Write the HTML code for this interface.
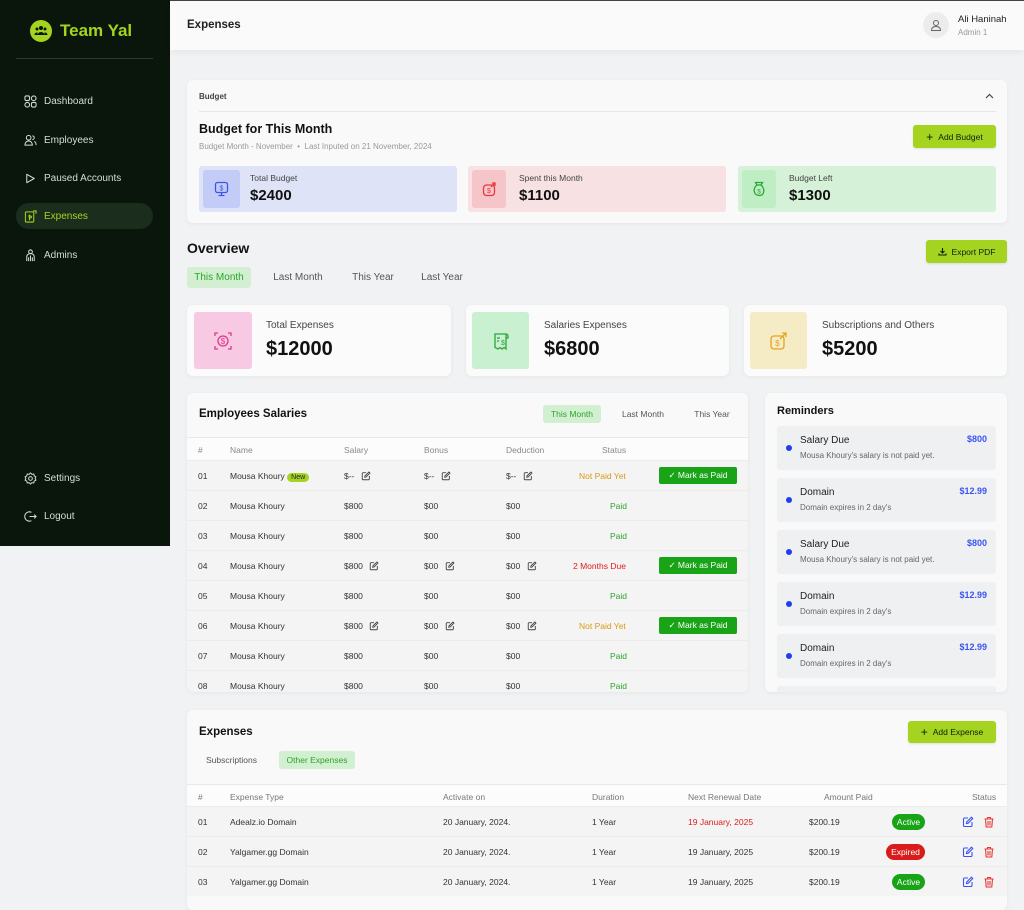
<!DOCTYPE html>
<html><head><meta charset="utf-8"><style>
*{box-sizing:border-box;margin:0;padding:0}
body{width:1024px;height:900px;overflow:hidden;background:#f1f2f3;font-family:"Liberation Sans",Arial,sans-serif;color:#1c1f1d;position:relative;font-size:9px}
.a{position:absolute}
.side{left:0;top:0;width:170px;height:546px;background:#0a160c}
.nav{left:24px;font-size:10px;color:#d6dbd7;display:flex;align-items:center;gap:7px}
.nav svg{width:13px;height:13px}
.card{background:#f9f9f9;border-radius:6px;box-shadow:0 1px 4px rgba(0,0,0,.05)}
.btn{background:#a4d41f;border-radius:3px;font-size:8.5px;color:#102008;display:flex;align-items:center;justify-content:center;gap:5px;box-shadow:0 1px 2px rgba(0,0,0,.1)}
.tab{font-size:10px;color:#555;display:flex;align-items:center;justify-content:center}
.tabon{background:#d3efd1;color:#2aa52a;border-radius:3px}
.ib{border-radius:3px;display:flex;align-items:center;justify-content:center}
.lbl{font-size:8.5px;color:#444}
.big{font-size:15px;font-weight:bold;color:#111}
.big2{font-size:20px;font-weight:bold;color:#111}
.row{position:absolute;left:0;right:0;height:30px;border-top:1px solid #ececec;background:#f4f4f4;font-size:8.5px;color:#333}
.row span{position:absolute;top:10px}
.mp{position:absolute;left:472px;top:6px;width:78px;height:17px;background:#19a317;color:#fff;border-radius:2px;font-size:8.5px;display:flex;align-items:center;justify-content:center;gap:5px}
.ed{display:inline-block;width:10px;height:10px;vertical-align:-2px;margin-left:4px}
.rem{position:absolute;left:12px;width:219px;height:44px;background:#eff0f1;border-radius:3px}
.rem .d{position:absolute;left:9px;top:19px;width:6px;height:6px;border-radius:50%;background:#1d3ff0}
.rem .t{position:absolute;left:23px;top:9px;font-size:10px;color:#222}
.rem .s{position:absolute;left:23px;top:25px;font-size:8px;color:#666}
.rem .v{position:absolute;right:9px;top:8px;font-size:9px;font-weight:bold;color:#3b55f0}
.pill{position:absolute;top:7px;height:16px;border-radius:8px;color:#fff;font-size:8.5px;display:flex;align-items:center;justify-content:center}
.ic{position:absolute;top:9px;width:12px;height:12px}
</style></head><body>
<svg width="0" height="0" style="position:absolute"><defs>
<symbol id="ed" viewBox="0 0 12 12"><path d="M6 2H2.5A1 1 0 0 0 1.5 3v6.5a1 1 0 0 0 1 1H9a1 1 0 0 0 1-1V6" fill="none" stroke="currentColor" stroke-width="1.1"/><path d="M9.5 1.2l1.3 1.3L6 7.3 4.4 7.6 4.7 6z" fill="none" stroke="currentColor" stroke-width="1.1" stroke-linejoin="round"/></symbol>
<symbol id="tr" viewBox="0 0 12 12"><path d="M1.5 3h9M4.5 3V1.5h3V3M2.5 3l.7 8h5.6l.7-8M5 5v4.5M7 5v4.5" fill="none" stroke="currentColor" stroke-width="1.1"/></symbol>
</defs></svg>
<div class="a" style="left:0;top:0;width:1024px;height:1px;background:#444"></div>
<div class="a side">
 <div class="a" style="left:30px;top:20px;width:22px;height:22px;border-radius:50%;background:#a4d41f"></div>
 <svg class="a" style="left:34px;top:25px" width="14" height="12" viewBox="0 0 14 12"><circle cx="7" cy="3" r="2" fill="#0a160c"/><circle cx="3" cy="4" r="1.5" fill="#0a160c"/><circle cx="11" cy="4" r="1.5" fill="#0a160c"/><path d="M3.5 10a3.5 3 0 0 1 7 0z M0.5 10a2.5 2.5 0 0 1 3-2.5v2.5z M13.5 10a2.5 2.5 0 0 0-3-2.5v2.5z" fill="#0a160c"/></svg>
 <div class="a" style="left:60px;top:21px;font-size:17px;font-weight:bold;color:#a4d41f">Team Yal</div>
 <div class="a" style="left:16px;top:58px;width:137px;height:1px;background:#2a3a2c"></div>
 <div class="a nav" style="top:95px"><svg viewBox="0 0 14 14" fill="none" stroke="#d6dbd7" stroke-width="1.1"><rect x="1" y="1" width="5" height="5" rx="1.5"/><rect x="8" y="1" width="5" height="5" rx="2.5"/><rect x="1" y="8" width="5" height="5" rx="2.5"/><rect x="8" y="8" width="5" height="5" rx="1.5"/></svg>Dashboard</div>
 <div class="a nav" style="top:134px"><svg viewBox="0 0 14 14" fill="none" stroke="#d6dbd7" stroke-width="1.1"><circle cx="5" cy="4" r="2.5"/><path d="M1 12c0-3 2-4.5 4-4.5s4 1.5 4 4.5z"/><path d="M9 2a2 2 0 0 1 0 4M11 8c1.5.5 2 2 2 4"/></svg>Employees</div>
 <div class="a nav" style="top:172px"><svg viewBox="0 0 14 14" fill="none" stroke="#d6dbd7" stroke-width="1.1"><path d="M3 2.5l8 4.5-8 4.5z" stroke-linejoin="round"/></svg>Paused Accounts</div>
 <div class="a" style="left:16px;top:203px;width:137px;height:26px;border-radius:13px;background:#1b2d1d"></div>
 <div class="a nav" style="top:210px;color:#a4d41f"><svg viewBox="0 0 14 14" fill="none" stroke="#a4d41f" stroke-width="1.1"><rect x="1.5" y="2" width="9" height="11" rx="1"/><path d="M6 5v6M4.5 6.5h2.5a1 1 0 0 1 0 2h-2"/><path d="M10 1l3 0v3"/></svg>Expenses</div>
 <div class="a nav" style="top:249px"><svg viewBox="0 0 14 14" fill="none" stroke="#d6dbd7" stroke-width="1.1"><circle cx="7" cy="3" r="2"/><path d="M3 13V8a4 3 0 0 1 8 0v5M7 7v6M5 9v4M9 9v4"/></svg>Admins</div>
 <div class="a nav" style="top:472px"><svg viewBox="0 0 14 14" fill="none" stroke="#d6dbd7" stroke-width="1.1"><circle cx="7" cy="7" r="2"/><path d="M7 1l1.5 1.5 2-.3.5 2 1.8 1L12 7l.8 1.8-1.8 1-.5 2-2-.3L7 13l-1.5-1.5-2 .3-.5-2-1.8-1L2 7l-.8-1.8 1.8-1 .5-2 2 .3z"/></svg>Settings</div>
 <div class="a nav" style="top:510px"><svg viewBox="0 0 14 14" fill="none" stroke="#d6dbd7" stroke-width="1.1"><path d="M8 2.5A5 5 0 1 0 8 11.5M6 7h7M11 5l2 2-2 2"/></svg>Logout</div>
</div>
<div class="a" style="left:170px;top:1px;width:854px;height:49px;background:#fafafa;box-shadow:0 2px 6px rgba(0,0,0,.05)"></div>
<div class="a" style="left:187px;top:19px;font-size:11.5px;font-weight:bold;color:#222">Expenses</div>
<div class="a" style="left:923px;top:12px;width:26px;height:26px;border-radius:50%;background:#ececec"></div>
<svg class="a" style="left:930px;top:19px" width="12" height="12" viewBox="0 0 12 12" fill="none" stroke="#666" stroke-width="1"><circle cx="6" cy="4" r="2.5"/><path d="M1.5 11.5c0-3 2-4 4.5-4s4.5 1 4.5 4z"/></svg>
<div class="a" style="left:958px;top:14px;font-size:9.5px;color:#222">Ali Haninah</div>
<div class="a" style="left:958px;top:28px;font-size:8px;color:#999">Admin 1</div>

<div class="a card" style="left:187px;top:80px;width:820px;height:143px"></div>
<div class="a" style="left:199px;top:92px;font-size:8px;font-weight:bold;color:#444">Budget</div>
<svg class="a" style="left:985px;top:93px" width="9" height="6" viewBox="0 0 9 6" fill="none" stroke="#444" stroke-width="1.2"><path d="M1 5l3.5-3.5L8 5"/></svg>
<div class="a" style="left:199px;top:111px;width:797px;height:1px;background:#e6e6e6"></div>
<div class="a" style="left:199px;top:122px;font-size:12.5px;font-weight:bold;color:#111">Budget for This Month</div>
<div class="a" style="left:199px;top:142px;font-size:8px;color:#999">Budget Month - November &nbsp;•&nbsp; Last Inputed on 21 November, 2024</div>
<div class="a btn" style="left:913px;top:125px;width:83px;height:23px"><b style="font-size:12px;font-weight:normal">+</b>Add Budget</div>
<div class="a" style="left:199px;top:166px;width:258px;height:46px;background:#dfe3f7;border-radius:3px"></div>
<div class="a ib" style="left:203px;top:170px;width:37px;height:38px;background:#c3ccf6"><svg width="15" height="16" viewBox="0 0 15 16" fill="none" stroke="#3a55e8" stroke-width="1.3"><rect x="1.5" y="1.5" width="12" height="10" rx="2"/><path d="M7.5 11.5v3M4.5 14.5h6"/><text x="7.5" y="9.5" font-size="7" text-anchor="middle" fill="#3a55e8" stroke="none" font-family="Liberation Sans">$</text></svg></div>
<div class="a lbl" style="left:250px;top:173px">Total Budget</div>
<div class="a big" style="left:250px;top:187px">$2400</div>
<div class="a" style="left:468px;top:166px;width:258px;height:46px;background:#f8e1e3;border-radius:3px"></div>
<div class="a ib" style="left:472px;top:170px;width:34px;height:38px;background:#f6c5ca"><svg width="15" height="15" viewBox="0 0 15 15" fill="none" stroke="#e5393d" stroke-width="1.3"><rect x="1.5" y="3" width="11" height="10.5" rx="3"/><path d="M9 5l4-4M10 1h3v3"/><text x="7" y="11" font-size="7" text-anchor="middle" fill="#e5393d" stroke="none" font-family="Liberation Sans">$</text></svg></div>
<div class="a lbl" style="left:519px;top:173px">Spent this Month</div>
<div class="a big" style="left:519px;top:187px">$1100</div>
<div class="a" style="left:738px;top:166px;width:258px;height:46px;background:#d5f1d8;border-radius:3px"></div>
<div class="a ib" style="left:742px;top:170px;width:34px;height:38px;background:#bfeec5"><svg width="14" height="16" viewBox="0 0 14 16" fill="none" stroke="#2ba536" stroke-width="1.3"><path d="M5 4L3.5 1.5h7L9 4M5 4h4M5 4C1 7 1 14 7 14.5s6-7.5 2-10.5"/><text x="7" y="12.5" font-size="6.5" text-anchor="middle" fill="#2ba536" stroke="none" font-family="Liberation Sans">$</text></svg></div>
<div class="a lbl" style="left:789px;top:173px">Budget Left</div>
<div class="a big" style="left:789px;top:187px">$1300</div>

<div class="a" style="left:187px;top:240px;font-size:14px;font-weight:bold;color:#111">Overview</div>
<div class="a btn" style="left:926px;top:240px;width:81px;height:23px"><svg width="9" height="9" viewBox="0 0 9 9" fill="none" stroke="#102008" stroke-width="1.1"><path d="M4.5 1v5M2.5 4l2 2 2-2M1 6.5V8h7V6.5"/></svg>Export PDF</div>
<div class="a tab tabon" style="left:187px;top:267px;width:64px;height:21px">This Month</div>
<div class="a tab" style="left:268px;top:267px;width:60px;height:21px">Last Month</div>
<div class="a tab" style="left:347px;top:267px;width:52px;height:21px">This Year</div>
<div class="a tab" style="left:417px;top:267px;width:50px;height:21px">Last Year</div>

<div class="a card" style="left:187px;top:305px;width:264px;height:71px;background:#fbfbfb"></div>
<div class="a ib" style="left:194px;top:312px;width:58px;height:57px;background:#f7c9e3"><svg width="20" height="20" viewBox="0 0 20 20" fill="none" stroke="#e0388b" stroke-width="1.3"><circle cx="10" cy="10" r="5"/><path d="M2 5V2h3M18 5V2h-3M2 15v3h3M18 15v3h-3"/><text x="10" y="13" font-size="8" text-anchor="middle" fill="#e0388b" stroke="none" font-family="Liberation Sans">$</text></svg></div>
<div class="a" style="left:266px;top:320px;font-size:10px;color:#444">Total Expenses</div>
<div class="a big2" style="left:266px;top:338px">$12000</div>
<div class="a card" style="left:466px;top:305px;width:263px;height:71px;background:#fbfbfb"></div>
<div class="a ib" style="left:472px;top:312px;width:57px;height:57px;background:#c9f0d0"><svg width="20" height="20" viewBox="0 0 20 20" fill="none" stroke="#2ba536" stroke-width="1.3"><path d="M4 3h11v15l-2-1.5-2 1.5-2-1.5-2 1.5-3-1.5z"/><path d="M15 3a2 2 0 0 1 2 2v2h-2M6 7h3M6 10h2"/><text x="12" y="14" font-size="7" text-anchor="middle" fill="#2ba536" stroke="none" font-family="Liberation Sans">$</text></svg></div>
<div class="a" style="left:544px;top:320px;font-size:10px;color:#444">Salaries Expenses</div>
<div class="a big2" style="left:544px;top:338px">$6800</div>
<div class="a card" style="left:744px;top:305px;width:263px;height:71px;background:#fbfbfb"></div>
<div class="a ib" style="left:750px;top:312px;width:57px;height:57px;background:#f5ecc5"><svg width="20" height="20" viewBox="0 0 20 20" fill="none" stroke="#e3a420" stroke-width="1.3"><rect x="2" y="5" width="13" height="13" rx="3"/><path d="M11 8l6-6M13 2h4v4"/><text x="8.5" y="15" font-size="8" text-anchor="middle" fill="#e3a420" stroke="none" font-family="Liberation Sans">$</text></svg></div>
<div class="a" style="left:822px;top:320px;font-size:10px;color:#444">Subscriptions and Others</div>
<div class="a big2" style="left:822px;top:338px">$5200</div>

<div class="a card" style="left:187px;top:393px;width:561px;height:299px;overflow:hidden">
 <div class="a" style="left:12px;top:15px;font-size:11.5px;font-weight:bold;color:#111">Employees Salaries</div>
 <div class="a tab tabon" style="left:356px;top:12px;width:58px;height:18px;font-size:8.5px">This Month</div>
 <div class="a tab" style="left:430px;top:12px;width:52px;height:18px;font-size:8.5px">Last Month</div>
 <div class="a tab" style="left:500px;top:12px;width:50px;height:18px;font-size:8.5px">This Year</div>
 <div class="a" style="left:0;right:0;top:44px;height:23px;background:#fcfcfc;border-top:1px solid #e8e8e8;font-size:8.5px;color:#888">
  <span class="a" style="left:11px;top:7px">#</span><span class="a" style="left:43px;top:7px">Name</span><span class="a" style="left:157px;top:7px">Salary</span><span class="a" style="left:237px;top:7px">Bonus</span><span class="a" style="left:319px;top:7px">Deduction</span><span class="a" style="left:415px;top:7px">Status</span></div>
 <div class="row" style="top:67px"><span style="left:11px">01</span><span style="left:43px">Mousa Khoury <i style="font-style:normal;background:#a4d41f;border-radius:6px;padding:1px 4px;font-size:7px;color:#223">New</i></span><span style="left:157px">$-- <svg class="ed" style="color:#444"><use href="#ed"/></svg></span><span style="left:237px">$-- <svg class="ed" style="color:#444"><use href="#ed"/></svg></span><span style="left:319px">$-- <svg class="ed" style="color:#444"><use href="#ed"/></svg></span><span style="left:392px;color:#d89a14">Not Paid Yet</span><div class="mp">✓ Mark as Paid</div></div>
 <div class="row" style="top:97px"><span style="left:11px">02</span><span style="left:43px">Mousa Khoury</span><span style="left:157px">$800</span><span style="left:237px">$00</span><span style="left:319px">$00</span><span style="left:423px;color:#2aa52a">Paid</span></div>
 <div class="row" style="top:127px"><span style="left:11px">03</span><span style="left:43px">Mousa Khoury</span><span style="left:157px">$800</span><span style="left:237px">$00</span><span style="left:319px">$00</span><span style="left:423px;color:#2aa52a">Paid</span></div>
 <div class="row" style="top:157px"><span style="left:11px">04</span><span style="left:43px">Mousa Khoury</span><span style="left:157px">$800 <svg class="ed" style="color:#444"><use href="#ed"/></svg></span><span style="left:237px">$00 <svg class="ed" style="color:#444"><use href="#ed"/></svg></span><span style="left:319px">$00 <svg class="ed" style="color:#444"><use href="#ed"/></svg></span><span style="left:386px;color:#e01b1b">2 Months Due</span><div class="mp">✓ Mark as Paid</div></div>
 <div class="row" style="top:187px"><span style="left:11px">05</span><span style="left:43px">Mousa Khoury</span><span style="left:157px">$800</span><span style="left:237px">$00</span><span style="left:319px">$00</span><span style="left:423px;color:#2aa52a">Paid</span></div>
 <div class="row" style="top:217px"><span style="left:11px">06</span><span style="left:43px">Mousa Khoury</span><span style="left:157px">$800 <svg class="ed" style="color:#444"><use href="#ed"/></svg></span><span style="left:237px">$00 <svg class="ed" style="color:#444"><use href="#ed"/></svg></span><span style="left:319px">$00 <svg class="ed" style="color:#444"><use href="#ed"/></svg></span><span style="left:392px;color:#d89a14">Not Paid Yet</span><div class="mp">✓ Mark as Paid</div></div>
 <div class="row" style="top:247px"><span style="left:11px">07</span><span style="left:43px">Mousa Khoury</span><span style="left:157px">$800</span><span style="left:237px">$00</span><span style="left:319px">$00</span><span style="left:423px;color:#2aa52a">Paid</span></div>
 <div class="row" style="top:277px"><span style="left:11px">08</span><span style="left:43px">Mousa Khoury</span><span style="left:157px">$800</span><span style="left:237px">$00</span><span style="left:319px">$00</span><span style="left:423px;color:#2aa52a">Paid</span></div>
</div>

<div class="a card" style="left:765px;top:393px;width:242px;height:299px;overflow:hidden">
 <div class="a" style="left:12px;top:12px;font-size:11px;font-weight:bold;color:#111">Reminders</div>
 <div class="rem" style="top:33px"><div class="d"></div><div class="t">Salary Due</div><div class="s">Mousa Khoury's salary is not paid yet.</div><div class="v">$800</div></div>
 <div class="rem" style="top:85px"><div class="d"></div><div class="t">Domain</div><div class="s">Domain expires in 2 day's</div><div class="v">$12.99</div></div>
 <div class="rem" style="top:137px"><div class="d"></div><div class="t">Salary Due</div><div class="s">Mousa Khoury's salary is not paid yet.</div><div class="v">$800</div></div>
 <div class="rem" style="top:189px"><div class="d"></div><div class="t">Domain</div><div class="s">Domain expires in 2 day's</div><div class="v">$12.99</div></div>
 <div class="rem" style="top:241px"><div class="d"></div><div class="t">Domain</div><div class="s">Domain expires in 2 day's</div><div class="v">$12.99</div></div>
 <div class="rem" style="top:293px"></div>
</div>

<div class="a card" style="left:187px;top:710px;width:820px;height:200px;overflow:hidden">
 <div class="a" style="left:12px;top:16px;font-size:11.5px;font-weight:bold;color:#111">Expenses</div>
 <div class="a btn" style="left:721px;top:11px;width:88px;height:22px"><b style="font-size:12px;font-weight:normal">+</b>Add Expense</div>
 <div class="a tab" style="left:12px;top:41px;width:65px;height:18px;font-size:8.5px">Subscriptions</div>
 <div class="a tab tabon" style="left:92px;top:41px;width:76px;height:18px;font-size:8.5px">Other Expenses</div>
 <div class="a" style="left:0;right:0;top:74px;height:22px;background:#fcfcfc;border-top:1px solid #e8e8e8;font-size:8.5px;color:#777">
  <span class="a" style="left:11px;top:7px">#</span><span class="a" style="left:43px;top:7px">Expense Type</span><span class="a" style="left:256px;top:7px">Activate on</span><span class="a" style="left:405px;top:7px">Duration</span><span class="a" style="left:501px;top:7px">Next Renewal Date</span><span class="a" style="left:637px;top:7px">Amount Paid</span><span class="a" style="left:785px;top:7px">Status</span></div>
 <div class="row" style="top:96px"><span style="left:11px">01</span><span style="left:43px">Adealz.io Domain</span><span style="left:256px">20 January, 2024.</span><span style="left:405px">1 Year</span><span style="left:501px;color:#e01b1b">19 January, 2025</span><span style="left:622px">$200.19</span><div class="pill" style="left:705px;width:33px;background:#19a317">Active</div><svg class="ic" style="left:775px;color:#3b55f0"><use href="#ed"/></svg><svg class="ic" style="left:796px;color:#e53935"><use href="#tr"/></svg></div>
 <div class="row" style="top:126px"><span style="left:11px">02</span><span style="left:43px">Yalgamer.gg Domain</span><span style="left:256px">20 January, 2024.</span><span style="left:405px">1 Year</span><span style="left:501px">19 January, 2025</span><span style="left:622px">$200.19</span><div class="pill" style="left:699px;width:39px;background:#d81b1b">Expired</div><svg class="ic" style="left:775px;color:#3b55f0"><use href="#ed"/></svg><svg class="ic" style="left:796px;color:#e53935"><use href="#tr"/></svg></div>
 <div class="row" style="top:156px"><span style="left:11px">03</span><span style="left:43px">Yalgamer.gg Domain</span><span style="left:256px">20 January, 2024.</span><span style="left:405px">1 Year</span><span style="left:501px">19 January, 2025</span><span style="left:622px">$200.19</span><div class="pill" style="left:705px;width:33px;background:#19a317">Active</div><svg class="ic" style="left:775px;color:#3b55f0"><use href="#ed"/></svg><svg class="ic" style="left:796px;color:#e53935"><use href="#tr"/></svg></div>
</div>
</body></html>
